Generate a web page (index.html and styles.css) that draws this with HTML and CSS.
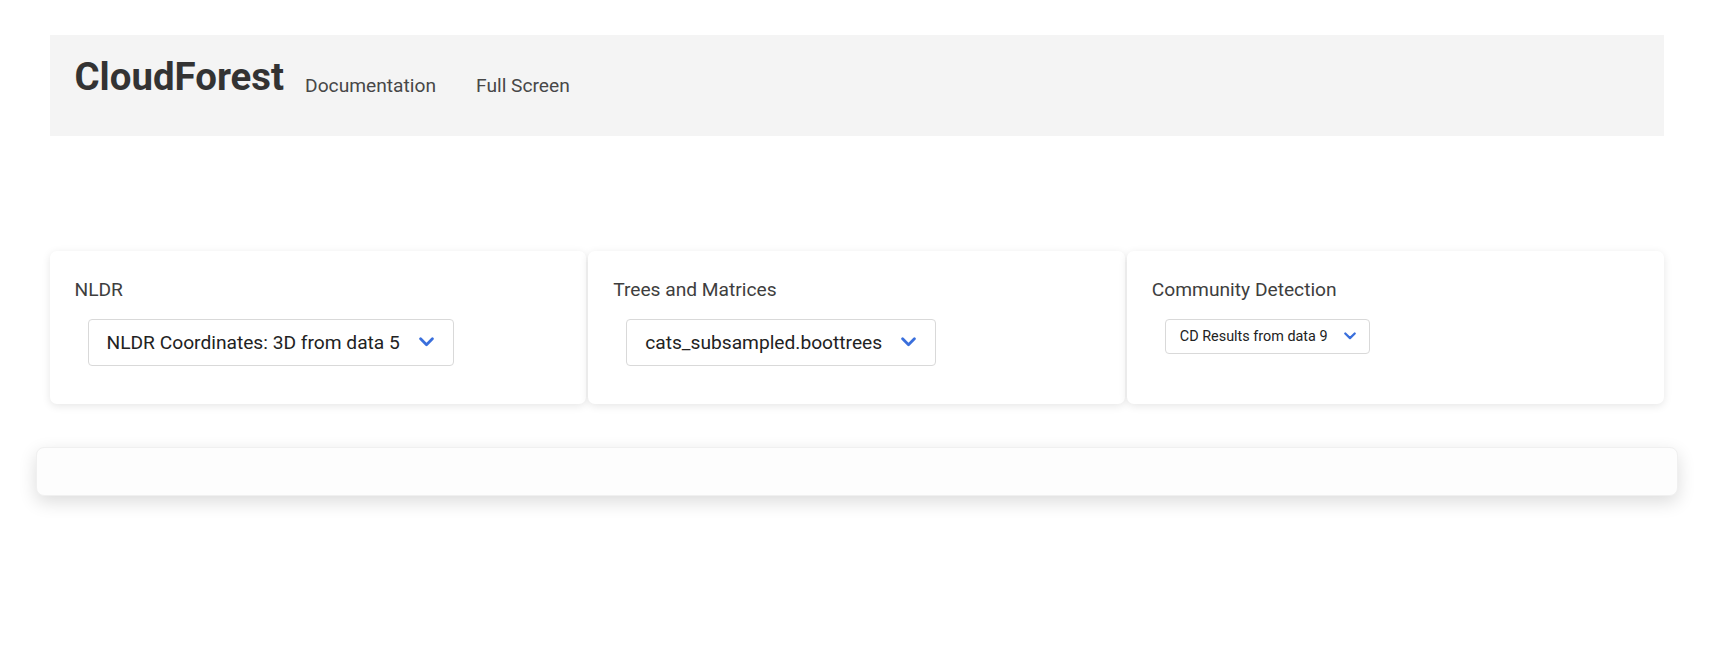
FILE: index.html
```html
<!DOCTYPE html>
<html lang="en">
<head>
    <meta charset="UTF-8">
    <title>CloudForest</title>
    <link rel="stylesheet" href="styles.css">
</head>
<body>

<div class="page">
    <div class="top-bar">
        <h1 class="brand">CloudForest</h1>
        <ul class="nav">
            <li><a href="#">Documentation</a></li>
            <li><a href="#">Full Screen</a></li>
        </ul>
    </div>

    <div class="panels">
        <div class="panel">
            <p class="panel-title">NLDR</p>
            <div class="picker">
                <span>NLDR Coordinates: 3D from data 5</span>
                <svg class="chevron" viewBox="0 0 14 9"><path d="M1.5 1.5 L7 7 L12.5 1.5"/></svg>
            </div>
        </div>
        <div class="panel">
            <p class="panel-title">Trees and Matrices</p>
            <div class="picker">
                <span>cats_subsampled.boottrees</span>
                <svg class="chevron" viewBox="0 0 14 9"><path d="M1.5 1.5 L7 7 L12.5 1.5"/></svg>
            </div>
        </div>
        <div class="panel">
            <p class="panel-title">Community Detection</p>
            <div class="picker picker-sm">
                <span>CD Results from data 9</span>
                <svg class="chevron" viewBox="0 0 14 9"><path d="M1.5 1.5 L7 7 L12.5 1.5"/></svg>
            </div>
        </div>
    </div>

    <div class="output-box"></div>
</div>

</body>
</html>
```

FILE: styles.css
```css
* {
    margin: 0;
    padding: 0;
    box-sizing: border-box;
}

body {
    background: #ffffff;
    font-family: Roboto, "Liberation Sans", sans-serif;
    color: #333333;
}

.page {
    width: 1614px;
    margin: 0 auto;
    padding: 35px 0 60px;
}

.top-bar {
    display: flex;
    align-items: flex-start;
    height: 101px;
    padding: 18px 25px 0;
    background-color: #f4f4f4;
}

.brand {
    font-size: 38.4px;
    line-height: 48px;
    font-weight: 700;
    color: #333333;
    margin-right: 21px;
}

.nav {
    display: flex;
    gap: 40px;
    list-style: none;
    margin-top: 19px;
}

.nav a {
    font-size: 19.2px;
    line-height: 28.5px;
    color: #474747;
    text-decoration: none;
}

.panels {
    display: flex;
    gap: 2px;
    margin-top: 115px;
}

.panel {
    flex: 1;
    height: 153px;
    padding: 25px 25px 0;
    background: #ffffff;
    border-radius: 7px;
    box-shadow: 0 2px 9px rgba(0, 0, 0, 0.1);
}

.panel-title {
    font-size: 19.2px;
    line-height: 28.5px;
    color: #3e3e3e;
}

.picker {
    display: inline-flex;
    align-items: center;
    gap: 19px;
    height: 47px;
    margin: 14px 0 0 13px;
    padding: 0 19px 0 18px;
    border: 1px solid #d9d9d9;
    border-radius: 4px;
    font-size: 19.2px;
    color: #222222;
    background: #ffffff;
}

.picker-sm {
    height: 35px;
    gap: 16px;
    padding: 0 13px 0 14px;
    font-size: 14.4px;
}

.chevron {
    width: 15px;
    height: 10px;
    fill: none;
    stroke: #3a6fdc;
    stroke-width: 2.6;
    stroke-linecap: round;
    stroke-linejoin: round;
}

.picker-sm .chevron {
    width: 12px;
    height: 8px;
}

.output-box {
    height: 49px;
    margin: 43px -14px 0;
    background: #fdfdfd;
    border: 1px solid #f0f0f0;
    border-radius: 8px;
    box-shadow: 0 6px 18px rgba(0, 0, 0, 0.14);
}
```
